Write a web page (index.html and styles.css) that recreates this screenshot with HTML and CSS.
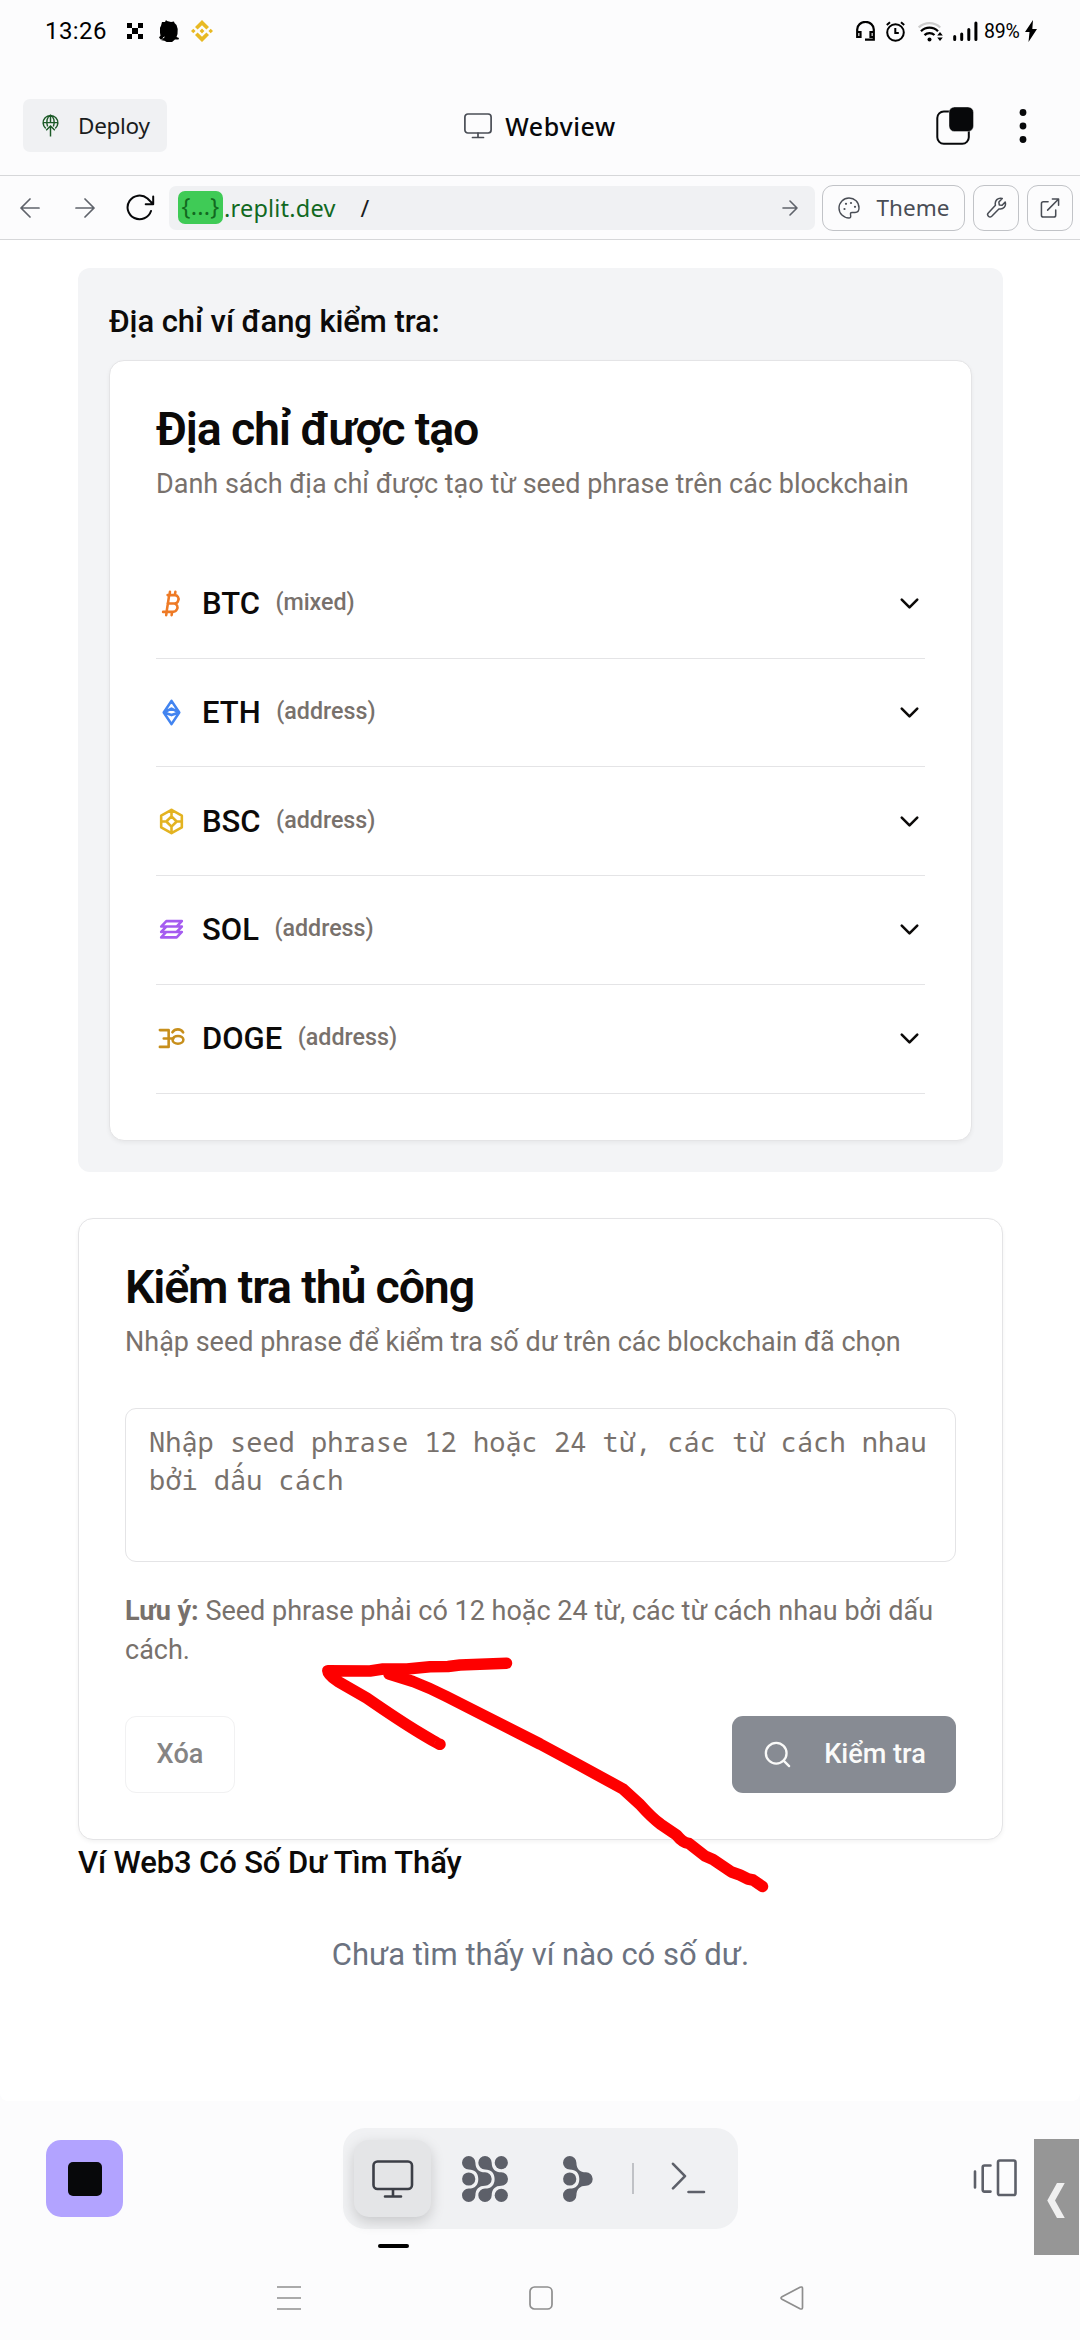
FILE: index.html
```html
<!DOCTYPE html>
<html lang="vi">
<head>
<meta charset="utf-8">
<title>Webview</title>
<link rel="stylesheet" href="styles.css">
</head>
<body>
<div class="screen">
  <header class="status">
    <span class="clock">13:26</span>
    <svg class="st-okx" width="16" height="16" viewBox="0 0 3 3" shape-rendering="crispEdges"><path d="M0 0h1v1h1v1h-1v1h-1v-1h1v-1h-1zM2 0h1v1h-1zM2 2h1v1h-1z"/></svg>
    <svg class="st-blob" width="20" height="22" viewBox="0 0 20 22"><path d="M3 2l3 0 1-2 1 1 4 1 3-.5.5 1.500 2 2 1.200 4-.2 5-1 3 2.500 1-.5 1.500-3.500 0-3 2.500-5 .2-2.500-1.500-3-.5-1.500-1.500-1-1.500 1.500-1.500-.5-3 0-5 1-2z"/><path d="M4 18l1.500-1M2.500 19.500l1-.500M18 3l1 0M17.500 1.500l1 .500" stroke="#fcfcfd" stroke-width="1"/></svg>
    <svg class="st-bnb" width="22" height="22" viewBox="0 0 22 22" fill="#e8b923"><path d="M11 0l7 7-2.600 2.600L11 5.200 6.600 9.600 4 7zM11 22l7-7-2.600-2.600L11 16.800l-4.400-4.400L4 15zM11 8.600L13.400 11 11 13.400 8.600 11zM2.300 8.700L4.600 11l-2.300 2.300L0 11zM19.700 8.700L22 11l-2.300 2.300L17.400 11z"/></svg>
    <span class="grow"></span>
    <svg class="st-head" width="19" height="20" viewBox="0 0 19 20" fill="none" stroke="#000" stroke-width="2.200"><path d="M1.200 12V8.500a8.200 7.500 0 0 1 16.600 0V18.700H9M1.200 11h3.300v5H1.200zM17.800 11h-3.300v5h3.300z"/></svg>
    <svg class="st-alarm" width="19" height="21" viewBox="0 0 19 21" fill="none" stroke="#000" stroke-width="2"><circle cx="9.500" cy="11.500" r="8.300"/><path d="M9.300 7v5h3.500M.8 4L4 1.200M18.200 4L15 1.200"/></svg>
    <svg class="st-wifi" width="25" height="21" viewBox="0 0 25 21" fill="none" stroke="#000" stroke-width="2.300"><path d="M.7 6.500a15.500 15.500 0 0 1 21.500 0" stroke="#ccc"/><path d="M3 10.200a12 12 0 0 1 17 0M6.500 14.200a7.500 7.500 0 0 1 10-.2"/><circle cx="11.500" cy="18.500" r="2" fill="#000" stroke="none"/><path d="M22 11l2.800 3.500h-5.600zM22 20l2.800-3.500h-5.600z" fill="#000" stroke="none"/></svg>
    <svg class="st-sig" width="25" height="20" viewBox="0 0 25 20" fill="none" stroke="#000" stroke-width="3" stroke-linecap="round"><path d="M1.700 15.500v3M8.700 13v5.500M15.800 8.500v10M22.900 2v16.500"/></svg>
    <span class="batt">89%</span>
    <svg width="12" height="22" viewBox="0 0 12 22"><path d="M8 0L0 12h4.500L3.500 22 12 9H7.300z"/></svg>
  </header>

  <div class="titlebar">
    <button class="deploy">
      <svg width="17" height="23" viewBox="0 0 17 24" fill="none" stroke="#1c5a27" stroke-width="1.500"><path d="M3.500 15A7.700 7.700 0 1 1 13.500 15M1 9h15M5.500 13C3.500 8 5 3 8.500 1.200 12 3 13.500 8 11.500 13M8.500 1v7.500M8.500 23.500V13M4 17l4.500-4.500L13 17"/></svg>
      <span>Deploy</span>
    </button>
    <div class="tab-title">
      <svg width="28" height="26" viewBox="0 0 28 26" fill="none" stroke="#494d55" stroke-width="1.700"><rect x=".9" y="1" width="26.200" height="19" rx="3"/><path d="M14 20v4M8.500 24.500h11" stroke-linecap="round"/></svg>
      <span>Webview</span>
    </div>
    <div class="title-actions">
      <svg width="38" height="38" viewBox="0 0 38 38"><rect x="1.300" y="4.500" width="31.500" height="32.300" rx="6.500" fill="none" stroke="#07080a" stroke-width="2"/><rect x="13" y="0" width="24.500" height="24.500" rx="5.500" fill="#07080a" stroke="#fcfcfd" stroke-width=".4"/></svg>
      <svg width="8" height="34" viewBox="0 0 8 34" fill="#07080a"><circle cx="4" cy="3.500" r="3.400"/><circle cx="4" cy="17" r="3.400"/><circle cx="4" cy="30.500" r="3.400"/></svg>
    </div>
  </div>

  <div class="toolbar">
    <svg class="t-back" width="20" height="20" viewBox="0 0 20 20" fill="none" stroke="#5f636b" stroke-width="1.700" stroke-linecap="round" stroke-linejoin="round"><path d="M19 10H1M10 1l-9 9 9 9"/></svg>
    <svg class="t-fwd" width="20" height="20" viewBox="0 0 20 20" fill="none" stroke="#5f636b" stroke-width="1.700" stroke-linecap="round" stroke-linejoin="round"><path d="M1 10h18M10 1l9 9-9 9"/></svg>
    <svg class="t-load" width="29" height="27" viewBox="0 0 29 27" fill="none" stroke="#07080a" stroke-width="2" stroke-linecap="round" stroke-linejoin="round"><path d="M25 17A12 11.800 0 1 1 21.500 4.500L27 10M27.200 2.500v7.700h-7.500"/></svg>
    <div class="url">
      <span class="chip">{...}</span><span class="host">.replit.dev</span><span class="path">/</span>
      <svg width="16" height="16" viewBox="0 0 16 16" fill="none" stroke="#5f636b" stroke-width="1.600" stroke-linecap="round" stroke-linejoin="round"><path d="M1 8h14M8 1l7 7-7 7"/></svg>
    </div>
    <button class="tool theme">
      <svg width="22" height="22" viewBox="0 0 22 22" fill="none" stroke="#494d55" stroke-width="1.400" stroke-linejoin="round"><path d="M11 1a10 10 0 0 0 0 20q1.800 0 1.700-1.800c-.1-2.200-1-3.700 1.500-3.700H17c2.500 0 4-1.800 4-4.500C21 5 16.500 1 11 1z"/><g fill="#494d55" stroke="none"><circle cx="6.500" cy="12" r="1.100"/><circle cx="8" cy="6.800" r="1.100"/><circle cx="13" cy="6" r="1.100"/><circle cx="17" cy="9.800" r="1.100"/></g></svg>
      <span>Theme</span>
    </button>
    <button class="tool sq">
      <svg width="21" height="21" viewBox="0 0 21 22" fill="none" stroke="#494d55" stroke-width="1.600" stroke-linejoin="round"><path d="M16.500 1.500L13 5.300l.4 3 3 .4 3.200-3.400c1.300 4.200-1.700 8.200-6.600 7.200L5.500 20.200c-2.400 2.200-5.700-1.200-3.600-3.500l7.500-8C8.300 3.800 12 .2 16.500 1.500z"/></svg>
    </button>
    <button class="tool sq">
      <svg width="20" height="20" viewBox="0 0 20 21" fill="none" stroke="#494d55" stroke-width="1.600" stroke-linecap="round" stroke-linejoin="round"><path d="M8 4H3Q1 4 1 6v12q0 2 2 2h11q2 0 2-2v-5.500M12.500 1H19v6.500M18.500 1.500L7.500 12.700"/></svg>
    </button>
  </div>

  <main class="page">
    <section class="panel">
      <h3 class="sub">Địa chỉ ví đang kiểm tra:</h3>
      <div class="card">
        <h2 class="card-title">Địa chỉ được tạo</h2>
        <p class="desc">Danh sách địa chỉ được tạo từ seed phrase trên các blockchain</p>
        <ul class="coins">
          <li><svg class="coin btc" viewBox="0 0 24 24"><path d="M9 5.500h5.500a3 3 0 0 1 2.700 4.200 3 3 0 0 1-3 2.300H9h5.200a3 3 0 0 1 2 4.500 3.500 3.500 0 0 1-3.200 2H5.500M8.200 18.500l2-13M10.800 3l-.4 2.500M15 3l-.4 2.500M8.300 18.500L7.900 21M12.500 18.500l-.4 2.500"/></svg><b>BTC</b><small>(mixed)</small><svg class="chev" viewBox="0 0 24 24"><path d="M6 9l6 6 6-6"/></svg></li>
          <li><svg class="coin eth" viewBox="0 0 24 24"><path d="M6 12l6-9 6 9-6 9zM6 12l6-3 6 3-6 2z"/></svg><b>ETH</b><small>(address)</small><svg class="chev" viewBox="0 0 24 24"><path d="M6 9l6 6 6-6"/></svg></li>
          <li><svg class="coin bsc" viewBox="0 0 24 24"><path d="M12 3l8 4.500v9L12 21l-8-4.500v-9zM12 8l4 4-4 4-4-4zM12 3v5M12 16v5M4 12h4M16 12h4"/></svg><b>BSC</b><small>(address)</small><svg class="chev" viewBox="0 0 24 24"><path d="M6 9l6 6 6-6"/></svg></li>
          <li><svg class="coin sol" viewBox="0 0 24 24"><path d="M8 5.500h12l-4 4.200H4zM8 9.700h12l-4 4.200H4zM8 13.900h12l-4 4.200H4z"/></svg><b>SOL</b><small>(address)</small><svg class="chev" viewBox="0 0 24 24"><path d="M6 9l6 6 6-6"/></svg></li>
          <li><svg class="coin doge" viewBox="0 0 24 24"><path d="M3 5.500h6.800v13H3M6 12h7.500M12.700 7.200c2-3 6.500-3 8.300 0"/><ellipse cx="17" cy="13" rx="4.200" ry="3"/></svg><b>DOGE</b><small>(address)</small><svg class="chev" viewBox="0 0 24 24"><path d="M6 9l6 6 6-6"/></svg></li>
        </ul>
      </div>
    </section>

    <section class="card manual">
      <h2 class="card-title">Kiểm tra thủ công</h2>
      <p class="desc">Nhập seed phrase để kiểm tra số dư trên các blockchain đã chọn</p>
      <div class="seed">Nhập seed phrase 12 hoặc 24 từ, các từ cách nhau<br>bởi dấu cách</div>
      <p class="desc note"><strong>Lưu ý:</strong> Seed phrase phải có 12 hoặc 24 từ, các từ cách nhau bởi dấu cách.</p>
      <div class="actions">
        <button class="btn clear">Xóa</button>
        <button class="btn check"><svg width="31" height="31" viewBox="0 0 24 24" fill="none" stroke="#fafaf9" stroke-width="1.800" stroke-linecap="round"><circle cx="11" cy="11" r="8"/><path d="M21 21l-4.300-4.300"/></svg><span>Kiểm tra</span></button>
      </div>
      <svg class="scribble" width="452" height="240" viewBox="320 1655 452 240" fill="none" stroke="#fe0000" stroke-width="11.500" stroke-linecap="round" stroke-linejoin="round"><path d="M506.500 1663.300L460 1665 448 1666.500 430 1666.700 407 1669 383 1669 370 1671 327.800 1670.700Q328 1675 338 1681.500L366.700 1698 Q400 1721 420 1733T440 1744.300"/><path d="M389 1674L413 1681.500Q430 1688 446.500 1696.500L540 1744 580 1765.500 623 1789 640 1804.500 Q652 1818 661 1824.500L676.500 1835 Q683 1843 689 1843.500L705 1856 713 1859.500 731.500 1872 740 1875 748 1879 753 1880 762.500 1886.500"/></svg>
    </section>

    <h3 class="sub found">Ví Web3 Có Số Dư Tìm Thấy</h3>
    <p class="empty">Chưa tìm thấy ví nào có số dư.</p>
  </main>

  <footer class="dock">
    <button class="stop"><span></span></button>
    <div class="pill">
      <button class="active">
        <svg width="42" height="38" viewBox="0 0 42 38" fill="none" stroke="#3c3f47" stroke-width="2.600" stroke-linecap="round"><rect x="1.500" y="1.500" width="38.500" height="27.500" rx="4"/><path d="M21 29.500V36M13 36.500h16"/></svg>
      </button>
      <svg class="d-grid" width="46" height="46" viewBox="0 0 46 46" fill="#5d6069"><circle cx="39.300" cy="6.700" r="6.600"/><circle cx="6.700" cy="23" r="6.600"/><circle cx="39.300" cy="39.300" r="6.600"/><path d="M0 6.700A6.700 6.700 0 0 1 13.400 6.700C13.500 13 17 16.300 23 16.300A6.700 6.700 0 0 1 23 29.700C17 29.700 13.500 33 13.400 39.300A6.700 6.700 0 1 1 6.700 32.600C13 32.600 16.300 29 16.300 23S13 13.400 6.700 13.400A6.700 6.700 0 0 1 0 6.700z"/><path d="M16.300 6.700A6.700 6.700 0 0 1 29.700 6.700C29.800 13 33.300 16.300 39.300 16.300A6.700 6.700 0 0 1 39.300 29.700C33.300 29.700 29.800 33 29.700 39.300A6.700 6.700 0 1 1 23 32.600C29.300 32.600 32.600 29 32.600 23S29.300 13.400 23 13.400A6.700 6.700 0 0 1 16.300 6.700z"/></svg>
      <svg class="d-agent" width="30" height="46" viewBox="0 0 30 46" fill="#5d6069"><circle cx="6.700" cy="23" r="6.600"/><path d="M0 6.700A6.700 6.700 0 0 1 13.400 6.700C13.500 13 17 16.300 23 16.300A6.700 6.700 0 0 1 23 29.700C17 29.700 13.500 33 13.400 39.300A6.700 6.700 0 1 1 6.700 32.600C13 32.600 16.300 29 16.300 23S13 13.400 6.700 13.400A6.700 6.700 0 0 1 0 6.700z"/></svg>
      <span class="rule"></span>
      <svg class="d-term" width="35" height="32" viewBox="0 0 35 32" fill="none" stroke="#5d6069" stroke-width="2.600" stroke-linecap="round" stroke-linejoin="round"><path d="M2 1.800L14 14.100 2 26.300M17.500 30h15.500"/></svg>
    </div>
    <svg class="d-stack" width="44" height="38" viewBox="0 0 44 38" fill="none" stroke="#5d6069" stroke-width="2.600" stroke-linecap="round" stroke-linejoin="round"><path d="M2 12.500v16M17.500 6.500h-6q-1.800 0-1.800 1.800v22.500q0 1.800 1.800 1.800h6"/><rect x="25" y="1.500" width="17.500" height="34.500" rx="1.800"/></svg>
    <div class="handle"><svg width="19" height="35" viewBox="0 0 19 36"><path d="M10 0h8L8 18l10 18h-8L0 18z" fill="#f0f0f0"/></svg></div>
    <span class="indicator"></span>
  </footer>

  <nav class="nav">
    <svg width="24" height="24" viewBox="0 0 24 24" fill="none" stroke="#8e8e8e" stroke-width="1.700"><path d="M0 1h24M0 12h24M0 23h24"/></svg>
    <svg width="24" height="24" viewBox="0 0 24 24" fill="none" stroke="#8e8e8e" stroke-width="1.700"><rect x="1" y="1" width="22" height="22" rx="4.500"/></svg>
    <svg width="24" height="24" viewBox="0 0 24 24" fill="none" stroke="#8e8e8e" stroke-width="1.700"><path d="M2 10.800L20 1.300q2.500-1 2.500 1.200v19q0 2.200-2.500 1.200L2 13.200q-2-1.200 0-2.400z"/></svg>
  </nav>
</div>
</body>
</html>
```

FILE: styles.css
```css
* { box-sizing: border-box; margin: 0; padding: 0; }
body { background: #fcfcfd; font-family: Roboto, "Noto Sans", sans-serif; color: #0c0a09; }
button { border: 0; background: none; font: inherit; color: inherit; display: flex; align-items: center; }
svg { display: block; flex: none; }
ul { list-style: none; }
.grow { flex: 1; }
.screen { width: 1080px; height: 2340px; display: flex; flex-direction: column; overflow: hidden; }

.status { height: 62px; flex: none; display: flex; align-items: center; padding: 0 43px 0 45px; color: #000; }
.clock { font-size: 24px; letter-spacing: 0.4px; width: 82px; }
.st-blob { margin-left: 16px; }
.st-bnb { margin-left: 12px; }
.st-alarm { margin-left: 11px; }
.st-wifi { margin-left: 13px; }
.st-sig { margin-left: 10px; }
.batt { font-size: 19.5px; letter-spacing: -0.2px; width: 41px; margin-left: 6px; }

.titlebar { height: 113px; flex: none; display: grid; grid-template-columns: 1fr auto 1fr; align-items: center; padding: 14px 53px 0 23px; font-family: "Noto Sans", sans-serif; }
.deploy { width: 144px; height: 53px; border-radius: 7px; background: #f0f1f3; padding-left: 19px; gap: 19px; font-size: 22.500px; letter-spacing: -0.3px; color: #1a1c20; }
.tab-title { display: flex; align-items: center; gap: 12px; font-size: 25px; font-weight: 500; letter-spacing: 0.6px; margin-right: -30px; color: #07080a; }
.tab-title svg { margin-right: 1px; }
.title-actions { display: flex; justify-content: flex-end; align-items: center; gap: 45px; }

.toolbar { height: 65px; flex: none; border-top: 1px solid #d6d7d9; border-bottom: 1px solid #d6d7d9; display: flex; align-items: center; padding: 0 7px 0 20px; font-family: "Noto Sans", sans-serif; }
.t-fwd { margin-left: 35px; }
.t-load { margin-left: 31px; }
.url { width: 646px; height: 44px; margin-left: 14px; border-radius: 7px; background: #f0f1f3; display: flex; align-items: center; padding: 0 17px 0 9px; font-size: 23.500px; letter-spacing: 0.2px; color: #12691f; }
.chip { width: 45px; height: 33px; line-height: 31px; border-radius: 7px; background: #3fcb56; text-align: center; }
.host { margin-left: 1px; }
.path { margin-left: 25px; color: #1a1c20; flex: 1; }
.tool { height: 46px; border: 1px solid #c1c3c7; border-radius: 11px; justify-content: center; margin-left: 8px; color: #494d55; }
.theme { width: 143px; margin-left: 7px; gap: 17px; font-size: 22.500px; }
.sq { width: 46px; }

.page { height: 1861px; flex: none; background: #fff; border-radius: 0 0 8px 8px; padding: 28px 77px 0 78px; }
.panel { background: #f3f4f6; border-radius: 12px; padding: 31px 31px 31.500px; }
.sub { font-size: 31px; line-height: 46.500px; font-weight: 500; letter-spacing: -0.080px; }
.card { background: #fff; border: 1px solid #e4e4e6; border-radius: 15px; padding: 45px 46px; box-shadow: 0 2px 4px rgba(0,0,0,.05); }
.panel .card { margin-top: 14.500px; height: 780.500px; }
.card-title { font-size: 46.500px; line-height: 46.500px; font-weight: 600; letter-spacing: -1.160px; }
.desc { margin-top: 12.500px; font-size: 27px; line-height: 38.750px; color: #78716c; white-space: nowrap; }
.coins { margin-top: 46px; }
.coins li { height: 108.750px; border-bottom: 1px solid #e4e4e6; display: flex; align-items: center; }
.coins b { font-size: 31px; font-weight: 500; margin-left: 15px; }
.coins small { font-size: 23.250px; font-weight: 500; color: #78716c; margin: -3px auto 0 15.500px; }
.coin { width: 31px; height: 31px; fill: none; stroke-width: 2; stroke-linecap: round; stroke-linejoin: round; }
.btc { stroke: #ee7a25; }
.eth { stroke: #4284f0; }
.bsc { stroke: #e3b321; }
.sol { stroke: #a55cf0; }
.doge { stroke: #c78f1c; }
.chev { width: 31px; height: 31px; fill: none; stroke: #0c0a09; stroke-width: 2; stroke-linecap: round; stroke-linejoin: round; }

.manual { position: relative; margin-top: 46px; height: 622px; }
.seed { margin-top: 46px; height: 154.500px; border: 1px solid #e4e4e6; border-radius: 11px; padding: 14px 23px; font: 27px/38px "Noto Sans Mono", "DejaVu Sans Mono", monospace; color: #78716c; white-space: nowrap; }
.note { margin-top: 30px; white-space: normal; }
.note strong { font-weight: 700; }
.actions { margin-top: 46px; display: flex; justify-content: space-between; }
.btn { height: 77px; border-radius: 11px; font-size: 27.100px; font-weight: 500; justify-content: center; }
.clear { width: 110px; border: 1px solid #f1f1f2; color: #858484; }
.check { width: 224px; background: #878b93; color: #fafaf9; gap: 31px; }
.scribble { position: absolute; left: 241px; top: 436px; }
.found { letter-spacing: -0.120px; }
.empty { margin-top: 45px; text-align: center; font-size: 31px; line-height: 46.500px; color: #6b7280; }

.dock { position: relative; height: 162px; flex: none; display: flex; align-items: flex-start; padding: 27px 0 0 46px; }
.stop { width: 77px; height: 77px; margin-top: 12px; border-radius: 15px; background: #b2a3ff; justify-content: center; }
.stop span { width: 34px; height: 34px; border-radius: 5px; background: #07080a; }
.pill { width: 395px; height: 101px; margin-left: 220px; border-radius: 22px; background: #f0f1f3; display: flex; align-items: center; padding-left: 11px; }
.active { width: 77px; height: 77px; border-radius: 15px; background: #e4e5e7; justify-content: center; box-shadow: 0 5px 14px rgba(0,0,0,.17); }
.d-grid { margin-left: 31px; }
.d-agent { margin-left: 55px; }
.rule { width: 2px; height: 31px; background: #c0c2c6; margin-left: 39px; }
.d-term { margin-left: 37px; margin-top: -2px; }
.d-stack { margin: 31px 0 0 235px; }
.handle { width: 45px; height: 116px; margin: 11px 0 0 17px; background: #969696; display: flex; align-items: center; padding: 6px 0 0 13px; }
.indicator { position: absolute; left: 378px; top: 143px; width: 31px; height: 4px; border-radius: 2px; background: #000; }
.nav { height: 77px; flex: none; display: flex; justify-content: space-between; padding: 23px 276px 0 277px; }
```
